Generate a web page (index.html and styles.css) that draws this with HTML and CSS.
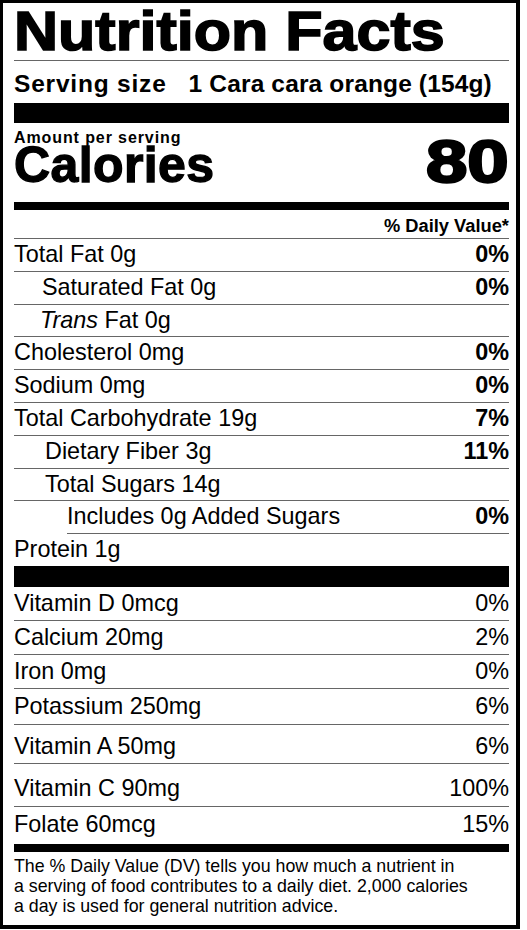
FILE: index.html
```html
<!DOCTYPE html>
<html lang="en">
<head>
  <meta charset="UTF-8">
  <title>Nutrition Facts</title>
  <link rel="stylesheet" href="styles.css">
</head>
<body>
  <div class="label">
    <h1 class="title"><span>Nutrition Facts</span></h1>

    <div class="serving">
      <span class="serving-name">Serving size</span>
      <span class="serving-value">1 Cara cara orange (154g)</span>
    </div>

    <div class="calories">
      <div>
        <div class="amount">Amount per serving</div>
        <div class="calories-name">Calories</div>
      </div>
      <div class="calories-value"><span>80</span></div>
    </div>

    <div class="dv-head">% Daily Value*</div>

    <div class="nutrients">
      <div class="row"><span>Total Fat 0g</span><b>0%</b></div>
      <div class="row sub"><span>Saturated Fat 0g</span><b>0%</b></div>
      <div class="row sub trans"><span><i>Trans</i> Fat 0g</span></div>
      <div class="row"><span>Cholesterol 0mg</span><b>0%</b></div>
      <div class="row"><span>Sodium 0mg</span><b>0%</b></div>
      <div class="row"><span>Total Carbohydrate 19g</span><b>7%</b></div>
      <div class="row sub carb"><span>Dietary Fiber 3g</span><b>11%</b></div>
      <div class="row sub carb"><span>Total Sugars 14g</span></div>
      <div class="row added"><span>Includes 0g Added Sugars</span><b>0%</b></div>
      <div class="row"><span>Protein 1g</span></div>
    </div>

    <div class="vitamins">
      <div class="row"><span>Vitamin D 0mcg</span><span>0%</span></div>
      <div class="row"><span>Calcium 20mg</span><span>2%</span></div>
      <div class="row"><span>Iron 0mg</span><span>0%</span></div>
      <div class="row potassium"><span>Potassium 250mg</span><span>6%</span></div>
      <div class="row vit-a"><span>Vitamin A 50mg</span><span>6%</span></div>
      <div class="row vit-c"><span>Vitamin C 90mg</span><span>100%</span></div>
      <div class="row folate"><span>Folate 60mcg</span><span>15%</span></div>
    </div>

    <p class="footnote">
      The % Daily Value (DV) tells you how much a nutrient in<br>
      a serving of food contributes to a daily diet. 2,000 calories<br>
      a day is used for general nutrition advice.
    </p>
  </div>
</body>
</html>
```

FILE: styles.css
```css
body {
  margin: 0;
  background: white;
  color: #000;
  font-family: "Liberation Sans", Arial, Helvetica, sans-serif;
}

.label {
  box-sizing: border-box;
  width: 521px;
  margin: -1px 0 0 -1px;
  padding: 0 7px 0 11px;
  border: 4px solid #000;
}

.title {
  margin: 0;
  padding-bottom: 2px;
  font-size: 56px;
  line-height: 55px;
  font-weight: bold;
  border-bottom: 1px solid #666;
}

.title span {
  display: inline-block;
  transform: scaleX(1.09);
  transform-origin: left;
  -webkit-text-stroke: 1.6px #000;
}

.serving {
  display: flex;
  gap: 22px;
  padding: 9px 0 5px;
  font-size: 24.5px;
  line-height: 28px;
  font-weight: bold;
  border-bottom: 20px solid #000;
}

.serving-name {
  letter-spacing: 0.8px;
}

.serving-value {
  letter-spacing: 0.15px;
}

.calories {
  display: flex;
  justify-content: space-between;
  align-items: last baseline;
  padding: 6px 0 19px;
  border-bottom: 8px solid #000;
  font-weight: bold;
}

.amount {
  font-size: 16px;
  line-height: 18px;
  letter-spacing: 0.9px;
}

.calories-name {
  font-size: 50px;
  line-height: 36px;
  letter-spacing: 0.4px;
  -webkit-text-stroke: 1.3px #000;
}

.calories-value {
  font-size: 60px;
  line-height: 36px;
}

.calories-value span {
  display: inline-block;
  transform: scaleX(1.24);
  transform-origin: right;
  -webkit-text-stroke: 2.4px #000;
}

.dv-head {
  padding: 6px 0 2px;
  font-size: 18.3px;
  line-height: 20px;
  font-weight: bold;
  text-align: right;
  border-bottom: 1px solid #666;
}

.row {
  display: flex;
  justify-content: space-between;
  font-size: 23.4px;
  border-bottom: 1px solid #666;
}

.row:last-child {
  border-bottom: none;
}

.nutrients {
  border-bottom: 21px solid #000;
}

.nutrients .row {
  line-height: 31.8px;
}

.nutrients .row.sub {
  padding-left: 28px;
}

.nutrients .row.trans {
  padding-left: 26px;
}

.nutrients .row.carb {
  padding-left: 31px;
}

.nutrients .row.added {
  margin-left: 53px;
}

.vitamins {
  border-bottom: 8px solid #000;
}

.vitamins .row {
  line-height: 33px;
}

.vitamins .row.potassium {
  padding: 1.5px 0 0.5px;
}

.vitamins .row.vit-a {
  padding-top: 5px;
}

.vitamins .row.vit-c {
  padding: 8px 0 1px;
}

.vitamins .row.folate {
  padding: 1.5px 0 2.5px;
}

.footnote {
  margin: 0;
  padding: 4.5px 0 8.5px;
  font-size: 17.8px;
  line-height: 20px;
}
```
